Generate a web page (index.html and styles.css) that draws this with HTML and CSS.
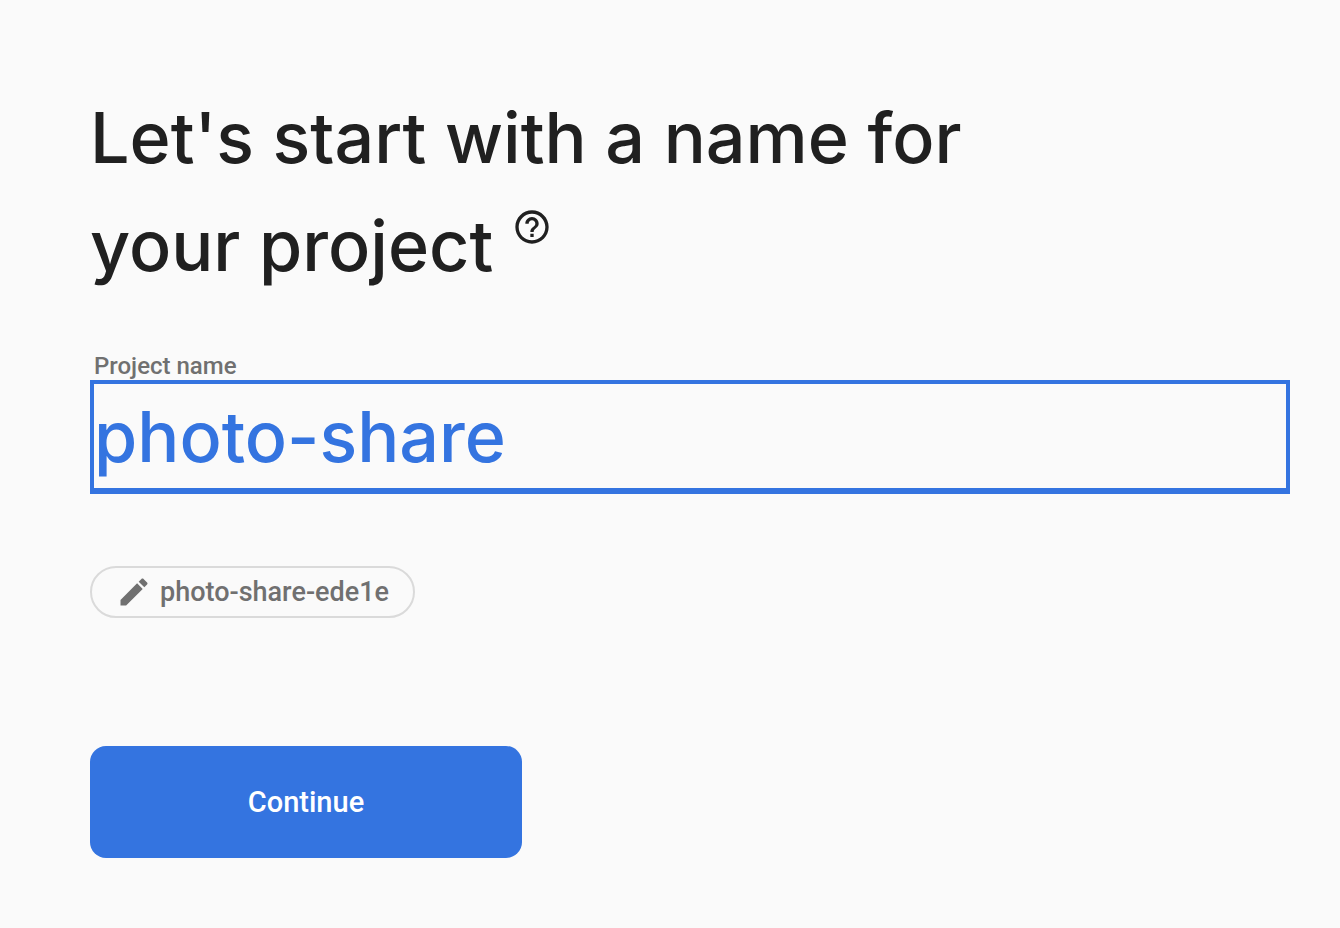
FILE: index.html
```html
<!DOCTYPE html>
<html lang="en">
<head>
<meta charset="utf-8">
<meta name="viewport" content="width=device-width, initial-scale=1">
<title>Create a project</title>
<link rel="stylesheet" href="styles.css">
</head>
<body>
<main class="page">
  <form class="project-form">
    <h1 class="title">Let's start with a name for<br>your project
      <button class="help" type="button" aria-label="Help">
        <svg class="help-icon" viewBox="0 0 24 24" aria-hidden="true"><path d="M11 18h2v-2h-2v2zm1-16C6.480 2 2 6.480 2 12s4.480 10 10 10 10-4.480 10-10S17.520 2 12 2zm0 18c-4.410 0-8-3.590-8-8s3.590-8 8-8 8 3.590 8 8-3.590 8-8 8zm0-14c-2.210 0-4 1.790-4 4h2c0-1.100.9-2 2-2s2 .9 2 2c0 2-3 1.750-3 5h2c0-2.250 3-2.500 3-5 0-2.210-1.790-4-4-4z"/></svg>
      </button>
    </h1>
    <div class="field">
      <label class="field-label" for="project-name">Project name</label>
      <input class="field-input" id="project-name" type="text" value="photo-share" spellcheck="false">
    </div>
    <button class="chip" type="button">
      <svg class="chip-icon" viewBox="0 0 24 24" aria-hidden="true"><path d="M3 17.250V21h3.750L17.810 9.940l-3.750-3.750L3 17.250zM20.710 7.040c.39-.39.39-1.020 0-1.410l-2.340-2.340c-.39-.39-1.020-.39-1.410 0l-1.830 1.830 3.750 3.750 1.830-1.830z"/></svg>
      <span>photo-share-ede1e</span>
    </button>
    <button class="continue" type="submit">Continue</button>
  </form>
</main>
</body>
</html>
```
FILE: styles.css
```css
* {
  box-sizing: border-box;
}

body {
  margin: 0;
  background: #fafafa;
  color: #202020;
  font-family: Roboto, "Liberation Sans", sans-serif;
}

.page {
  padding: 84px 50px 70px 90px;
}

.project-form {
  display: flex;
  flex-direction: column;
  align-items: flex-start;
}

.title {
  margin: 0;
  font-family: Inter, Roboto, sans-serif;
  font-size: 70px;
  font-weight: 500;
  line-height: 108px;
}

.help {
  padding: 0;
  border: 0;
  background: none;
  color: inherit;
  vertical-align: 24px;
  line-height: 0;
}

.help-icon {
  width: 40px;
  height: 40px;
  fill: currentColor;
}

.field {
  display: flex;
  flex-direction: column;
  width: 100%;
  margin-top: 52px;
}

.field-label {
  padding-left: 4px;
  color: #707070;
  font-size: 24px;
  font-weight: 500;
  line-height: 28px;
}

.field-input {
  width: 100%;
  height: 114px;
  padding: 0;
  border: 4px solid #3474e0;
  border-bottom-width: 6px;
  border-radius: 0;
  outline: 0;
  background: transparent;
  color: #3474e0;
  font-family: Inter, Roboto, sans-serif;
  font-size: 70px;
  font-weight: 500;
}

.chip {
  display: flex;
  align-items: center;
  gap: 8px;
  height: 52px;
  margin-top: 72px;
  padding: 0 24px;
  border: 2px solid #dadada;
  border-radius: 26px;
  background: transparent;
  color: #707070;
  font-family: inherit;
  font-size: 27px;
  font-weight: 500;
}

.chip-icon {
  width: 36px;
  height: 36px;
  fill: currentColor;
}

.continue {
  width: 432px;
  max-width: 100%;
  height: 112px;
  margin-top: 128px;
  border: 0;
  border-radius: 16px;
  background: #3474e0;
  color: #fff;
  font-family: inherit;
  font-size: 29px;
  font-weight: 500;
}
```
